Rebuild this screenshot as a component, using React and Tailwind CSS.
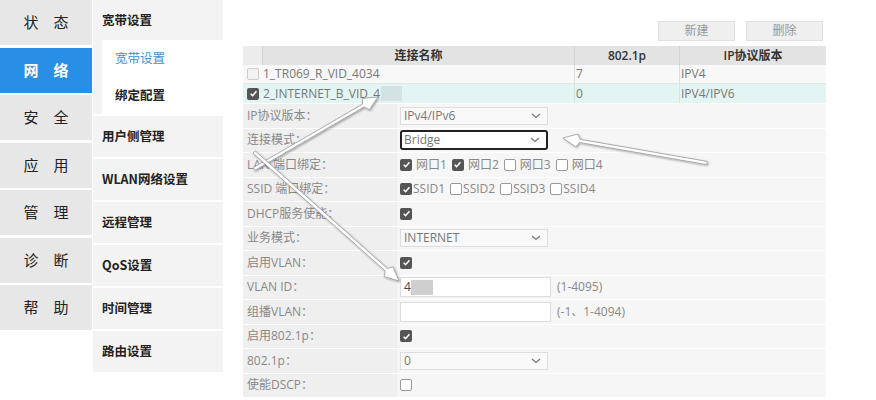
import React from 'react';

const sans = { fontFamily: '"Open Sans", "Noto Sans CJK SC", sans-serif' };

const leftNav = ['状态', '网络', '安全', '应用', '管理', '诊断', '帮助'];
const subNav = ['用户侧管理', 'WLAN网络设置', '远程管理', 'QoS设置', '时间管理', '路由设置'];

function Check({ on }) {
  return on ? (
    <span className="inline-flex w-[12px] h-[12px] rounded-[2px] bg-[#555] items-center justify-center shrink-0">
      <svg width="9" height="9" viewBox="0 0 10 10">
        <path d="M1.8 5.2 L4 7.4 L8.3 2.6" fill="none" stroke="#fff" strokeWidth="1.7" />
      </svg>
    </span>
  ) : (
    <span className="inline-block w-[12px] h-[12px] rounded-[2px] bg-white border border-[#999] shrink-0" />
  );
}

function Chevron() {
  return (
    <svg width="10" height="6" viewBox="0 0 10 6" className="ml-auto mr-[6px]">
      <path d="M1 1 L5 4.5 L9 1" fill="none" stroke="#777" strokeWidth="1.2" />
    </svg>
  );
}

function Select({ value, active }) {
  return active ? (
    <div className="w-[148px] h-[20px] rounded-[3px] border-2 border-[#222] bg-white flex items-center pl-[2px] text-[#777]">
      {value}
      <Chevron />
    </div>
  ) : (
    <div className="w-[148px] h-[18px] border border-[#ddd] bg-[#f9f9f9] flex items-center pl-[3px] text-[#777]">
      {value}
      <Chevron />
    </div>
  );
}

// arrow polygon from tail to head, white body with a grey edge
function arrowPoints(x1, y1, x2, y2) {
  const dx = x2 - x1, dy = y2 - y1;
  const len = Math.hypot(dx, dy);
  const ux = dx / len, uy = dy / len;
  const nx = -uy, ny = ux;
  const sw = 1.6, hl = 17, hw = 6.5;
  const bx = x2 - ux * hl, by = y2 - uy * hl;
  const pts = [
    [x1 + nx * sw, y1 + ny * sw],
    [bx + nx * sw, by + ny * sw],
    [bx + nx * hw + ux * 3, by + ny * hw + uy * 3],
    [x2, y2],
    [bx - nx * hw + ux * 3, by - ny * hw + uy * 3],
    [bx - nx * sw, by - ny * sw],
    [x1 - nx * sw, y1 - ny * sw],
  ];
  return pts.map((p) => p.map((v) => v.toFixed(1)).join(',')).join(' ');
}

const arrows = [
  [254, 169, 378, 97],
  [254, 152, 399, 281],
  [707, 163, 563, 138],
];

export default function App() {
  const rows = [
    { label: 'IP协议版本：', v: <Select value="IPv4/IPv6" /> },
    { label: '连接模式：', v: <Select value="Bridge" active /> },
    {
      label: 'LAN 端口绑定：',
      v: (
        <div className="flex items-center text-[#888]">
          {['网口1', '网口2', '网口3', '网口4'].map((t, i) => (
            <span key={t} className="flex items-center mr-[5px]">
              <Check on={i < 2} />
              <span className="ml-[4px]">{t}</span>
            </span>
          ))}
        </div>
      ),
    },
    {
      label: 'SSID 端口绑定：',
      v: (
        <div className="flex items-center text-[#888]">
          {['SSID1', 'SSID2', 'SSID3', 'SSID4'].map((t, i) => (
            <span key={t} className="flex items-center mr-[5px]">
              <Check on={i === 0} />
              <span className="ml-[1px]">{t}</span>
            </span>
          ))}
        </div>
      ),
    },
    { label: 'DHCP服务使能：', v: <Check on /> },
    { label: '业务模式：', v: <Select value="INTERNET" /> },
    { label: '启用VLAN：', v: <Check on /> },
    {
      label: 'VLAN ID：',
      v: (
        <div className="flex items-center">
          <div className="w-[151px] h-[20px] bg-white border border-[#ddd] flex items-center pl-[3px] text-[#444]">
            4<span className="w-[22px] h-[15px] bg-[#cfcfcf]" />
          </div>
          <span className="ml-[6px] text-[#888]">(1-4095)</span>
        </div>
      ),
    },
    {
      label: '组播VLAN：',
      v: (
        <div className="flex items-center">
          <div className="w-[151px] h-[20px] bg-white border border-[#ddd]" />
          <span className="ml-[6px] text-[#888]">(-1、1-4094)</span>
        </div>
      ),
    },
    { label: '启用802.1p：', v: <Check on /> },
    { label: '802.1p：', v: <Select value="0" /> },
    { label: '使能DSCP：', v: <Check /> },
  ];

  return (
    <div className="relative w-[876px] h-[400px] bg-white flex overflow-hidden">
      {/* level 1 menu */}
      <nav className="w-[92px] flex flex-col gap-[2.5px]" style={{ fontFamily: '"Noto Sans CJK SC", serif' }}>
        {leftNav.map((t, i) => (
          <div
            key={t}
            className={`h-[45px] flex items-center justify-center gap-[15px] text-[15px] ${
              i === 1 ? 'bg-[#2790e6] text-white font-bold' : 'bg-[#e7e7e7] text-[#222]'
            }`}
          >
            <span>{t[0]}</span>
            <span>{t[1]}</span>
          </div>
        ))}
      </nav>

      {/* level 2 menu */}
      <div className="ml-px w-[130px] text-[12.5px] font-bold text-[#222]" style={{ fontFamily: '"Noto Sans CJK SC", serif' }}>
        <div className="h-[40px] bg-[#f3f3f3] pl-[9px] flex items-center">宽带设置</div>
        <div className="bg-[#f3f3f3] pl-[9px]">
          <div className="h-[74px] bg-white pl-[13px] flex flex-col">
            <div className="h-[37px] flex items-center text-[#3a8fd9] font-normal">宽带设置</div>
            <div className="h-[37px] flex items-center">绑定配置</div>
          </div>
        </div>
        {subNav.map((t) => (
          <div key={t} className="mt-[2px] h-[41px] bg-[#f3f3f3] pl-[9px] flex items-center">
            {t}
          </div>
        ))}
      </div>

      {/* content */}
      <main className="ml-[20px] w-[583px] text-[12px]" style={sans}>
        <div className="pt-[21px] flex justify-end gap-[11px] pr-[3px]">
          {['新建', '删除'].map((t) => (
            <button key={t} className="w-[77px] h-[20px] bg-[#efefef] border border-[#e0e0e0] text-[#999] text-[12px]">
              {t}
            </button>
          ))}
        </div>

        <div className="mt-[5px]">
          <div className="flex h-[19px] bg-[#e3e3e3] text-[#333] font-semibold">
            <div className="w-[20px] border-r border-[#d2d2d2] bg-[#ececec]" />
            <div className="w-[312px] border-r border-[#d2d2d2] flex items-center justify-center">连接名称</div>
            <div className="w-[105px] border-r border-[#d2d2d2] flex items-center justify-center">802.1p</div>
            <div className="flex-1 flex items-center justify-center">IP协议版本</div>
          </div>
          <div className="flex h-[19px] bg-[#f8f8f8] text-[#777] border-b border-[#e6e6e6]">
            <div className="w-[20px] flex items-center justify-center">
              <span className="w-[12px] h-[12px] rounded-[2px] border border-[#ccc] bg-[#f3f3f3]" />
            </div>
            <div className="w-[312px] border-r border-[#ddd] flex items-center">1_TR069_R_VID_4034</div>
            <div className="w-[105px] border-r border-[#ddd] flex items-center pl-px">7</div>
            <div className="flex-1 flex items-center pl-px">IPV4</div>
          </div>
          <div className="flex h-[19px] bg-[#e3f5f3] text-[#777]">
            <div className="w-[20px] flex items-center justify-center">
              <Check on />
            </div>
            <div className="w-[312px] border-r border-[#d4e2e0] flex items-center">
              2_INTERNET_B_VID_4<span className="ml-[1px] w-[21px] h-[15px] bg-[#d3e3e2]" />
            </div>
            <div className="w-[105px] border-r border-[#d4e2e0] flex items-center pl-px">0</div>
            <div className="flex-1 flex items-center pl-px">IPV4/IPV6</div>
          </div>

          {rows.map((r) => (
            <div key={r.label} className="flex h-[24.5px] border-t border-white">
              <div className="w-[154px] bg-[#efefef] pl-[4px] flex items-center text-[#888]">{r.label}</div>
              <div className="flex-1 bg-[#f6f6f6] pl-[3px] flex items-center">{r.v}</div>
            </div>
          ))}
        </div>
      </main>

      {/* annotation arrows */}
      <svg className="absolute inset-0 pointer-events-none" width="876" height="400">
        <defs>
          <filter id="sh" x="-10%" y="-10%" width="120%" height="120%">
            <feDropShadow dx="1" dy="1" stdDeviation="0.8" floodColor="#000" floodOpacity="0.35" />
          </filter>
        </defs>
        {arrows.map((a, i) => (
          <polygon key={i} points={arrowPoints(...a)} fill="#fff" stroke="#9a9a9a" strokeWidth="0.8" filter="url(#sh)" />
        ))}
      </svg>
    </div>
  );
}
